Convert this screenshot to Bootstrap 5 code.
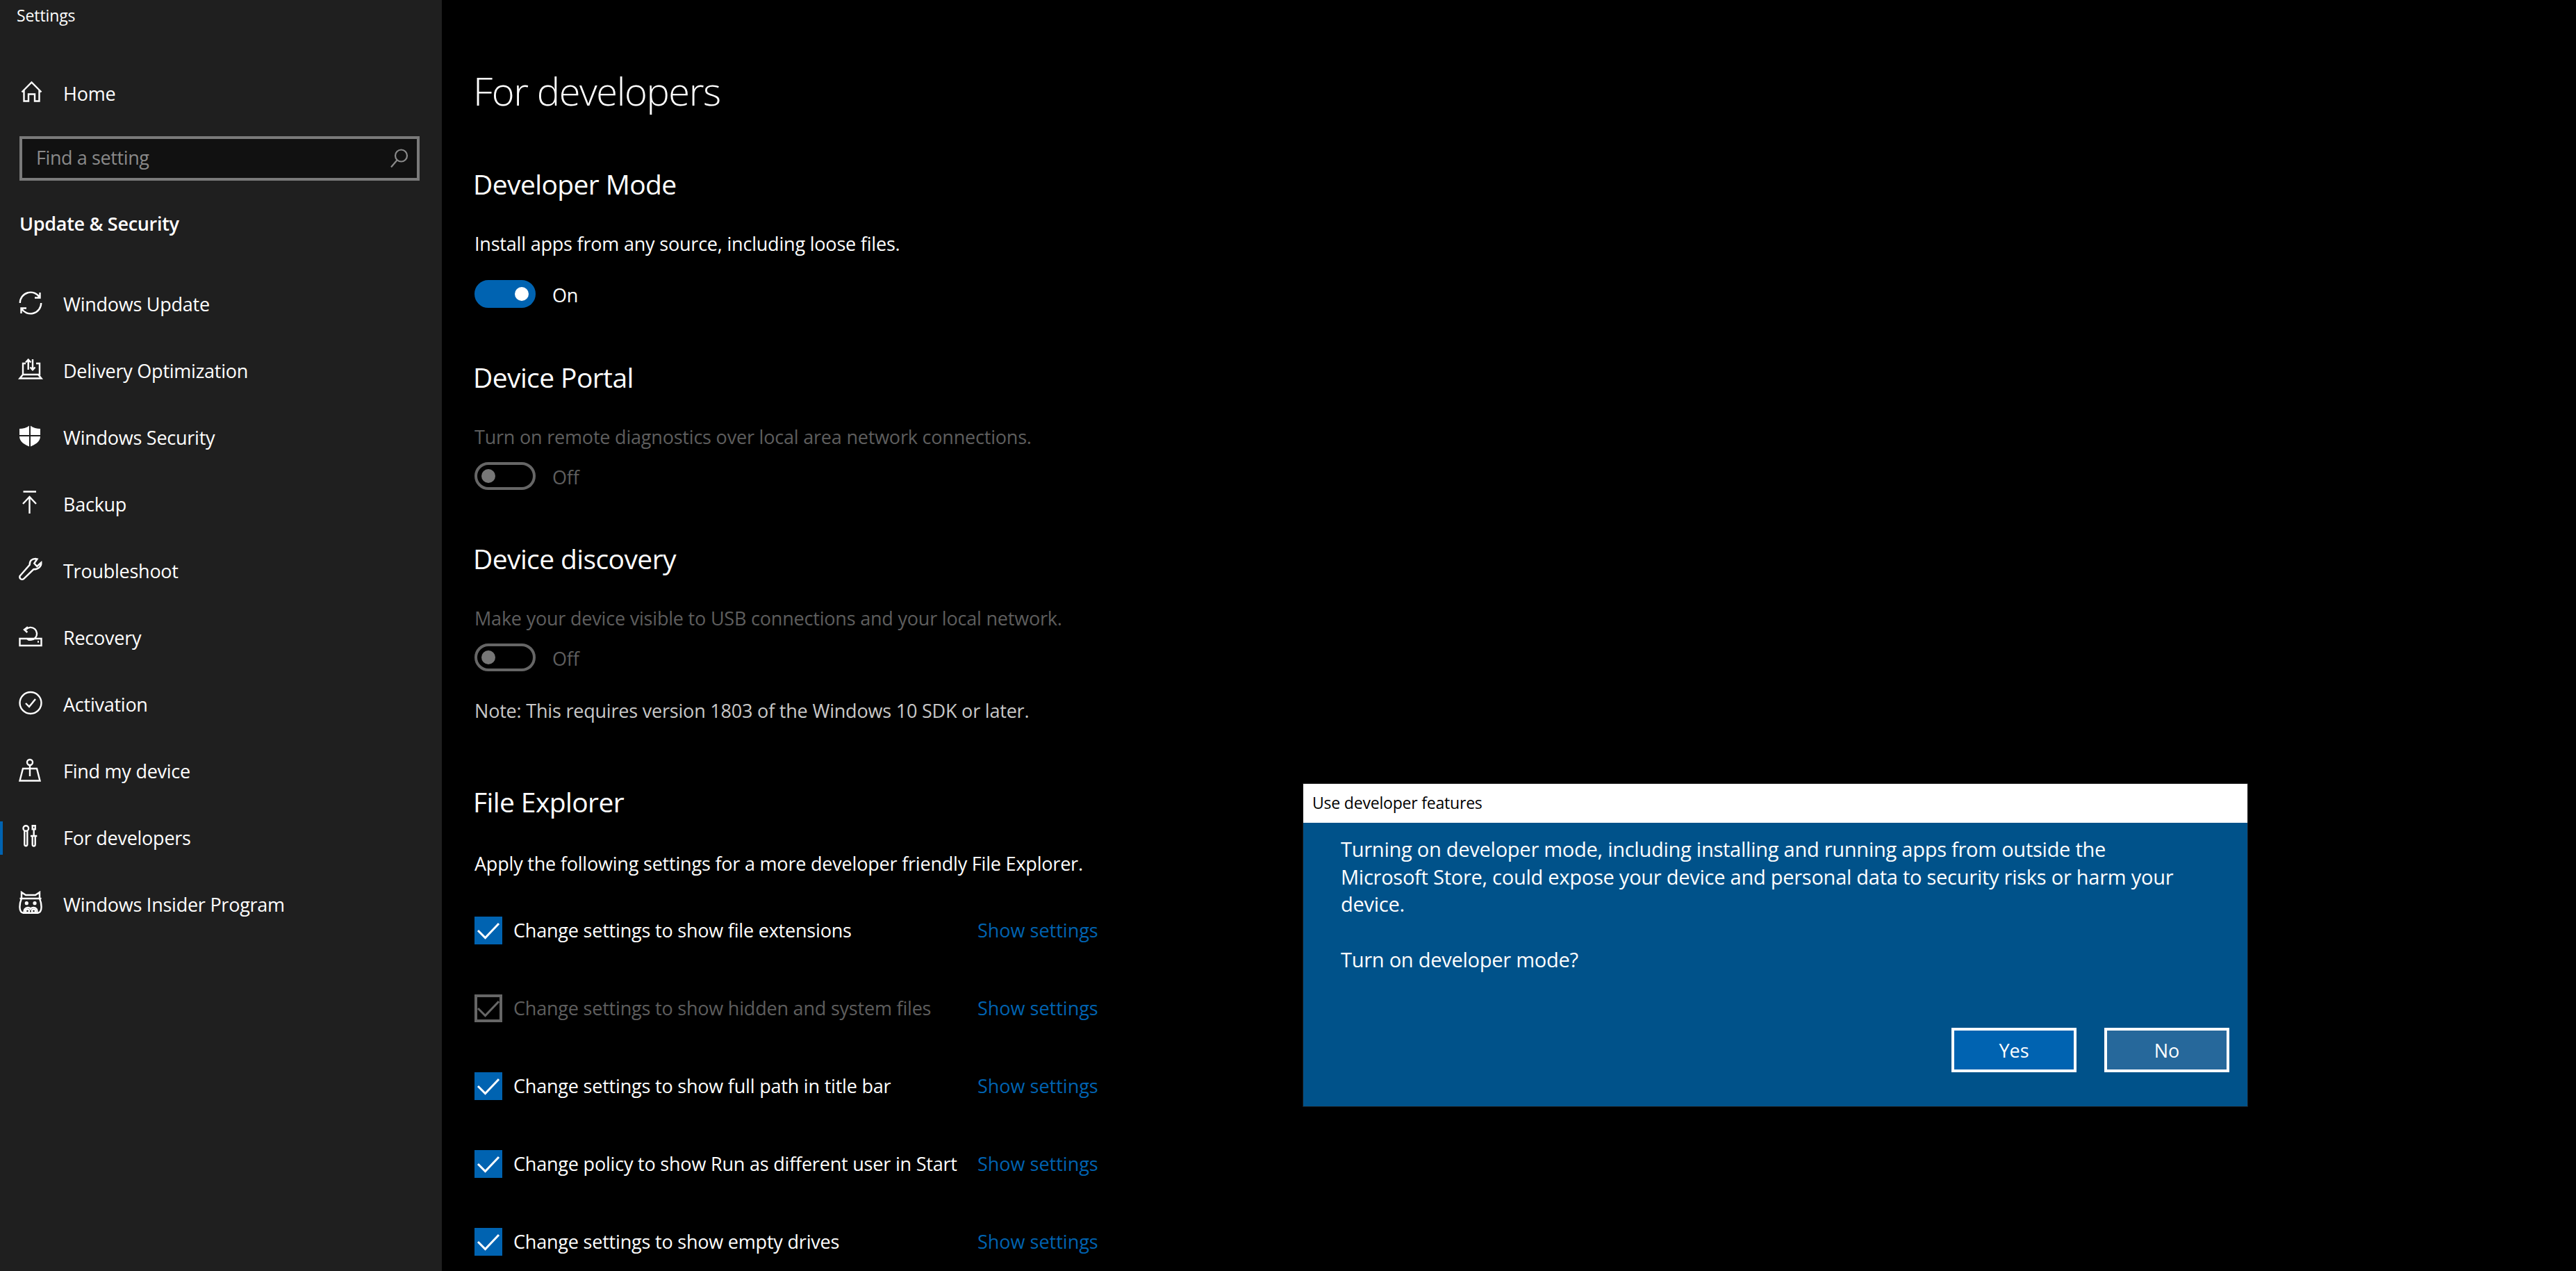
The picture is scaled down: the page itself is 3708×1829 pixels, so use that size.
<!doctype html>
<html lang="en">

<head>
  <meta charset="utf-8">
  <meta name="viewport" content="width=device-width, initial-scale=1">
  <title>Settings</title>
  <link href="https://cdn.jsdelivr.net/npm/bootstrap@5.3.5/dist/css/bootstrap.min.css" rel="stylesheet">
  <style>
    html, body { height: 100%; }

    body {
      background: #000;
      color: #fff;
      font-family: "Open Sans", "Noto Sans", sans-serif;
      font-size: 27px;
      letter-spacing: -0.2px;
      overflow: hidden;
    }

    .side-panel {
      width: 636px;
      height: 1829px;
      background: #1f1f1f;
      flex: none;
    }

    .app-name { height: 44px; line-height: 44px; padding-left: 24px; font-size: 23px; letter-spacing: -0.1px; }

    .side-top { margin-top: 43px; }

    .nav-row {
      height: 96px;
      color: #fff;
      padding-left: 24px;
      gap: 27px;
      position: relative;
      letter-spacing: -0.25px;
    }

    .nav-row:hover { color: #fff; }
    .nav-row svg { width: 40px; height: 40px; flex: none; fill: none; stroke: #fff; stroke-width: 2.4; }
    .nav-row.current::before {
      content: "";
      position: absolute;
      left: 0;
      top: 24px;
      width: 4px;
      height: 48px;
      background: #0063b1;
    }

    .search-wrap { margin: 13px 32px 0 28px; height: 64px; }

    .search-wrap .form-control {
      height: 64px;
      background: #111;
      border: 4px solid #7a7a7a;
      border-radius: 0;
      color: #fff;
      font-size: 27px;
      letter-spacing: -0.4px;
      padding: 0 20px 4px;
    }

    .search-wrap .form-control::placeholder { color: #8a8a8a; opacity: 1; }
    .search-wrap svg { position: absolute; right: 16px; top: 18px; width: 28px; height: 28px; fill: none; stroke: #8a8a8a; stroke-width: 2.2; }

    .group-name { height: 124px; line-height: 124px; padding-left: 28px; margin: 0 0 6px; font-size: 27px; font-weight: 600; letter-spacing: -0.3px; }

    .main-pane { padding: 90px 0 0 45px; }

    .page-title { font-size: 56px; font-weight: 300; line-height: 80px; margin: 0 0 70px; letter-spacing: -1.4px; }
    .section-title { font-size: 39px; font-weight: 400; line-height: 50px; margin: 0; letter-spacing: -0.6px; }
    .gap-a { margin-top: 75px; }
    .gap-b { margin-top: 74px; }
    .gap-c { margin-top: 86px; }
    .section-text { line-height: 40px; margin: 41px 0 0 2px; }
    .section-text.wide { margin-top: 44px; }
    .muted-text { color: #5e5e5e; }
    .section-text.note-text { margin-top: 37px; color: #c8c8c8; }

    .switch-row { margin: 16px 0 0 2px; gap: 24px; height: 40px; padding: 0; min-height: 0; }
    .switch-row.first { margin-top: 32px; }
    .switch-row .form-check-label { margin-top: 4px; }

    .form-switch .switch-box {
      width: 88px;
      height: 40px;
      margin: 0;
      float: none;
      border-radius: 20px;
      background-color: #000;
      border: 4px solid #666;
      background-image: url("data:image/svg+xml,%3Csvg xmlns='http://www.w3.org/2000/svg' viewBox='0 0 20 20'%3E%3Ccircle cx='10' cy='10' r='10' fill='%23777'/%3E%3C/svg%3E");
      background-size: 20px 20px;
      background-position: 6px center;
    }

    .form-switch .switch-box:checked {
      background-color: #0063b1;
      border-color: #0063b1;
      background-image: url("data:image/svg+xml,%3Csvg xmlns='http://www.w3.org/2000/svg' viewBox='0 0 20 20'%3E%3Ccircle cx='10' cy='10' r='10' fill='%23fff'/%3E%3C/svg%3E");
      background-position: 54px center;
    }

    .form-switch .switch-box:disabled { opacity: 1; }

    .check-list { margin: 56px 0 0 2px; gap: 72px; line-height: 40px; }
    .check-item { height: 40px; padding: 0; margin: 0; min-height: 0; width: 724px; gap: 16px; flex: none; }

    .form-check .check-box[type=checkbox] {
      width: 40px;
      height: 40px;
      margin: 0;
      float: none;
      flex: none;
      border-radius: 0;
      border: 0;
      background-size: 40px 40px;
    }

    .form-check .check-box[type=checkbox]:checked {
      background-color: #0063b1;
      background-image: url("data:image/svg+xml,%3Csvg xmlns='http://www.w3.org/2000/svg' viewBox='0 0 40 40'%3E%3Cpath d='M5 20l10.500 10.500L35 10' fill='none' stroke='%23fff' stroke-width='3'/%3E%3C/svg%3E");
    }

    .form-check .check-box[type=checkbox]:disabled {
      opacity: 1;
      background-color: #000;
      border: 4px solid #666;
      background-image: url("data:image/svg+xml,%3Csvg xmlns='http://www.w3.org/2000/svg' viewBox='0 0 32 32'%3E%3Cpath d='M1 16l10.500 10.500L31 6' fill='none' stroke='%23666' stroke-width='3'/%3E%3C/svg%3E");
      background-size: 32px 32px;
    }

    .form-check-input:disabled ~ .form-check-label { opacity: 1; color: #5e5e5e; }
    .check-item .form-check-label { white-space: nowrap; }

    .show-link { color: #0063b1; text-decoration: none; white-space: nowrap; letter-spacing: 0; }

    .dev-dialog {
      position: absolute;
      left: 1875px;
      top: 1127px;
      width: 1361px;
      height: 466px;
      background: #00528a;
      color: #fff;
      border: 1px solid #1a1a1a;
      border-radius: 0;
    }

    .dev-dialog .card-header {
      background: #fff;
      color: #000;
      height: 56px;
      line-height: 54px;
      padding: 0 0 0 13px;
      border: 0;
      border-radius: 0;
      font-size: 23px;
      letter-spacing: -0.2px;
    }

    .dev-dialog .card-body { padding: 18px 40px 0 54px; font-size: 29px; letter-spacing: -0.25px; line-height: 39.5px; }
    .dev-dialog p { margin: 0 0 40px; }

    .dlg-actions { position: absolute; right: 26px; bottom: 49px; gap: 40px; }

    .dlg-btn {
      width: 180px;
      height: 64px;
      border: 4px solid #fff;
      border-radius: 0;
      color: #fff;
      font-size: 27px;
      padding: 3px 0 0;
      --bs-btn-hover-color: #fff;
    }

    .dlg-yes { background: #0063b1; }
    .dlg-no { background: #26689b; }
  </style>
</head>

<body>
  <div class="d-flex">
    <aside class="side-panel">
      <div class="app-name">Settings</div>
      <nav class="nav flex-column side-top">
        <a class="nav-row d-flex align-items-center text-decoration-none" href="#">
          <svg viewBox="0 0 40 40"><path d="M7.5 17.5L21.5 3.5l14 14M10.5 14.5v16H17v-10h9v10h6.5v-16"/></svg>Home
        </a>
      </nav>
      <div class="search-wrap position-relative">
        <input type="text" class="form-control" placeholder="Find a setting">
        <svg viewBox="0 0 28 28"><circle cx="17.5" cy="10" r="8.5"/><path d="M11.5 16.5L3 26.5"/></svg>
      </div>
      <h2 class="group-name">Update &amp; Security</h2>
      <nav class="nav flex-column">
        <a class="nav-row d-flex align-items-center text-decoration-none" href="#">
          <svg viewBox="0 0 40 40"><path d="M4.8 18A15.2 15.2 0 0 1 33 10M33.5 3v7.5H26M35.2 18A15.2 15.2 0 0 1 7 26M6.5 33v-7.5H14"/></svg>Windows Update
        </a>
        <a class="nav-row d-flex align-items-center text-decoration-none" href="#">
          <svg viewBox="0 0 40 40"><path d="M13 9H9v16h24V9h-5M9 25l-4.500 5.500h31L31 25M16.700 18V4M13 7.500l3.700-4 3.700 4M23 3v15M19.500 14.500l3.500 3.800 3.500-3.800"/></svg>Delivery Optimization
        </a>
        <a class="nav-row d-flex align-items-center text-decoration-none" href="#">
          <svg viewBox="0 0 40 40"><path d="M19 2C14 6 9 7 4 7v11c0 8 8 12 15 15 7-3 15-7 15-15V7c-5 0-10-1-15-5z" fill="#fff" stroke="none"/><path d="M19 2v31M4 17h30" stroke="#1f1f1f" stroke-width="2"/></svg>Windows Security
        </a>
        <a class="nav-row d-flex align-items-center text-decoration-none" href="#">
          <svg viewBox="0 0 40 40"><path d="M9.500 1.500H28M18.500 33V9M9 19l9.500-10L28 19"/></svg>Backup
        </a>
        <a class="nav-row d-flex align-items-center text-decoration-none" href="#">
          <svg viewBox="0 0 40 40"><path d="M18.700 10.700C18.500 5 22 2 27 2l2.500.5-4.200 6.200 4 4.300 6-5.500c.5 5.500-4.300 10-11 9.800L10 31c-2.500 2-6.500 0-5.500-4z"/></svg>Troubleshoot
        </a>
        <a class="nav-row d-flex align-items-center text-decoration-none" href="#">
          <svg viewBox="0 0 40 40"><path d="M4.500 21h31v10h-31zM13.300 8A9 9 0 1 1 14 20.500M16 4.300L11 8l4.300 4"/><path d="M30 25.500h2"/></svg>Recovery
        </a>
        <a class="nav-row d-flex align-items-center text-decoration-none" href="#">
          <svg viewBox="0 0 40 40"><circle cx="20" cy="17.500" r="15.500"/><path d="M13 18l5 5 9-11"/></svg>Activation
        </a>
        <a class="nav-row d-flex align-items-center text-decoration-none" href="#">
          <svg viewBox="0 0 40 40"><circle cx="19" cy="7" r="4"/><path d="M19 11v16M9 16h20l4.500 17.500h-29z"/></svg>Find my device
        </a>
        <a class="nav-row current d-flex align-items-center text-decoration-none" href="#">
          <svg viewBox="0 0 40 40"><circle cx="13.300" cy="6" r="3.800"/><path d="M11.300 9.500V29c0 3 4 3 4 0V9.500M22.700 2.300h4v5h-4zM24.700 7.300V17M20 17h9.300M22.700 17v12c0 3.500 4 3.500 4 0V17"/></svg>For developers
        </a>
        <a class="nav-row d-flex align-items-center text-decoration-none" href="#">
          <svg viewBox="0 0 40 40"><path d="M7 2l6 4h14l6-4v9H7zM4.500 11h31M7 11C4 18 2.500 30 9 31.700h22C37.500 30 36 18 33 11M11 31.700c-1.500-4.700 2-7.700 5-7.700 2 0 3.500 1 4 2 .5-1 2-2 4.500-2 3.500 0 6 3 4.500 7.700"/><circle cx="15.500" cy="29" r="2.500"/><circle cx="24.500" cy="29" r="2.500"/><circle cx="14.300" cy="17.700" r="1.400" fill="#fff"/><circle cx="26" cy="17.700" r="1.400" fill="#fff"/></svg>Windows Insider Program
        </a>
      </nav>
    </aside>

    <main class="main-pane flex-grow-1">
      <h1 class="page-title">For developers</h1>

      <h2 class="section-title">Developer Mode</h2>
      <p class="section-text">Install apps from any source, including loose files.</p>
      <div class="form-check form-switch switch-row first d-flex align-items-center">
        <input class="form-check-input switch-box" type="checkbox" role="switch" id="devMode" checked>
        <label class="form-check-label" for="devMode">On</label>
      </div>

      <h2 class="section-title gap-a">Device Portal</h2>
      <p class="section-text muted-text">Turn on remote diagnostics over local area network connections.</p>
      <div class="form-check form-switch switch-row d-flex align-items-center">
        <input class="form-check-input switch-box" type="checkbox" role="switch" id="portal" disabled>
        <label class="form-check-label" for="portal">Off</label>
      </div>

      <h2 class="section-title gap-b">Device discovery</h2>
      <p class="section-text muted-text">Make your device visible to USB connections and your local network.</p>
      <div class="form-check form-switch switch-row d-flex align-items-center">
        <input class="form-check-input switch-box" type="checkbox" role="switch" id="discovery" disabled>
        <label class="form-check-label" for="discovery">Off</label>
      </div>
      <p class="section-text note-text">Note: This requires version 1803 of the Windows 10 SDK or later.</p>

      <h2 class="section-title gap-c">File Explorer</h2>
      <p class="section-text wide">Apply the following settings for a more developer friendly File Explorer.</p>

      <div class="check-list d-flex flex-column">
        <div class="d-flex align-items-center">
          <div class="form-check check-item d-flex align-items-center">
            <input class="form-check-input check-box" type="checkbox" id="c1" checked>
            <label class="form-check-label" for="c1">Change settings to show file extensions</label>
          </div>
          <a class="show-link" href="#">Show settings</a>
        </div>
        <div class="d-flex align-items-center">
          <div class="form-check check-item d-flex align-items-center">
            <input class="form-check-input check-box" type="checkbox" id="c2" checked disabled>
            <label class="form-check-label" for="c2">Change settings to show hidden and system files</label>
          </div>
          <a class="show-link" href="#">Show settings</a>
        </div>
        <div class="d-flex align-items-center">
          <div class="form-check check-item d-flex align-items-center">
            <input class="form-check-input check-box" type="checkbox" id="c3" checked>
            <label class="form-check-label" for="c3">Change settings to show full path in title bar</label>
          </div>
          <a class="show-link" href="#">Show settings</a>
        </div>
        <div class="d-flex align-items-center">
          <div class="form-check check-item d-flex align-items-center">
            <input class="form-check-input check-box" type="checkbox" id="c4" checked>
            <label class="form-check-label" for="c4">Change policy to show Run as different user in Start</label>
          </div>
          <a class="show-link" href="#">Show settings</a>
        </div>
        <div class="d-flex align-items-center">
          <div class="form-check check-item d-flex align-items-center">
            <input class="form-check-input check-box" type="checkbox" id="c5" checked>
            <label class="form-check-label" for="c5">Change settings to show empty drives</label>
          </div>
          <a class="show-link" href="#">Show settings</a>
        </div>
      </div>
    </main>
  </div>

  <div class="card dev-dialog">
    <div class="card-header">Use developer features</div>
    <div class="card-body">
      <p>Turning on developer mode, including installing and running apps from outside the<br>Microsoft Store, could expose your device and personal data to security risks or harm your<br>device.</p>
      <p>Turn on developer mode?</p>
    </div>
    <div class="dlg-actions d-flex">
      <button type="button" class="btn dlg-btn dlg-yes">Yes</button>
      <button type="button" class="btn dlg-btn dlg-no">No</button>
    </div>
  </div>

  <script src="https://cdn.jsdelivr.net/npm/bootstrap@5.3.5/dist/js/bootstrap.bundle.min.js"></script>
</body>
</html>
